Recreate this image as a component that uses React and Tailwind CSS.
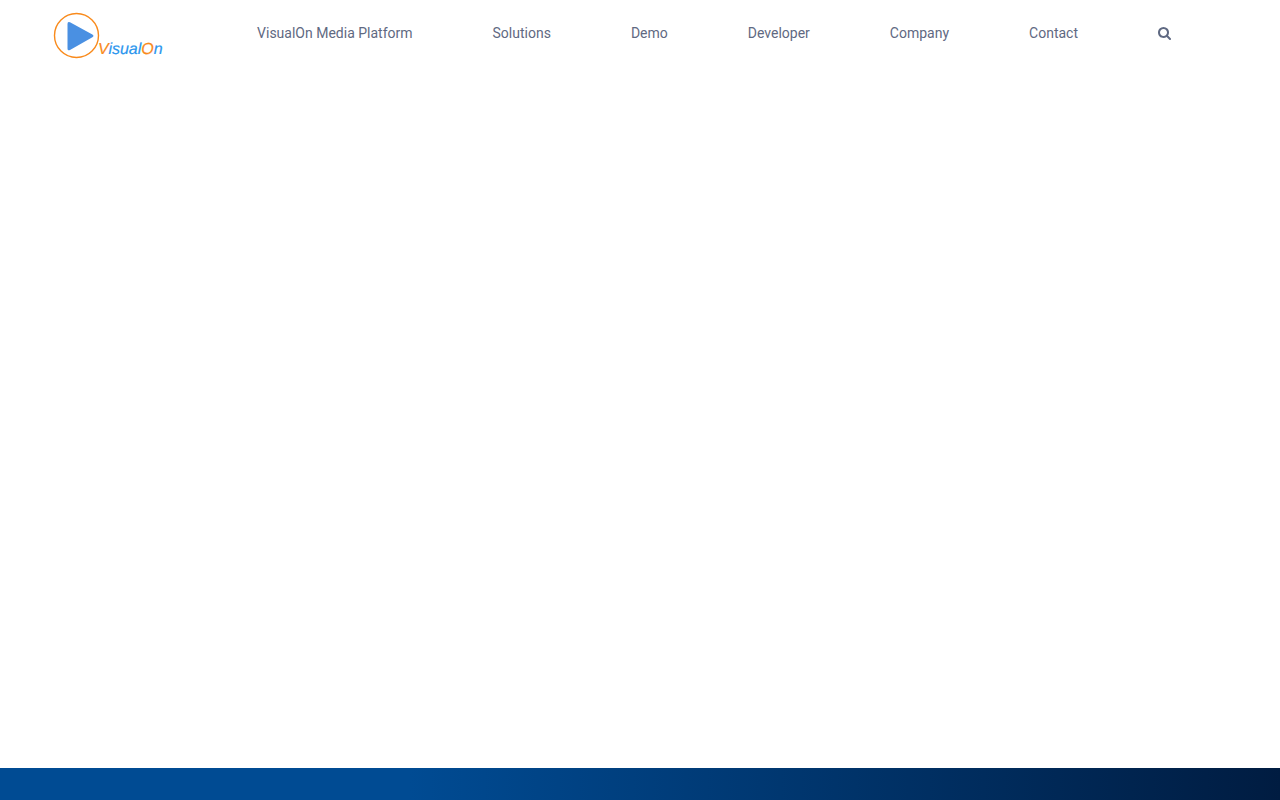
const links = [
  "VisualOn Media Platform",
  "Solutions",
  "Demo",
  "Developer",
  "Company",
  "Contact",
];

function Logo() {
  return (
    <svg width="112" height="48" viewBox="0 0 112 48" role="img" aria-label="VisualOn">
      <circle cx="23.5" cy="23.5" r="22" fill="none" stroke="#f98a1b" strokeWidth="1.4" />
      <path
        d="M14.5 12 Q14.500 9 17 10.300 L39.400 22.500 Q41.600 24 39.400 25.200 L17 38 Q14.500 39.200 14.500 36.500 Z"
        fill="#4a90e2"
      />
      <text
        x="45"
        y="42"
        fontSize="16"
        fontStyle="italic"
        fontFamily="Liberation Sans, Arial, sans-serif"
        textRendering="geometricPrecision"
        fill="#2b96ee"
        stroke="#2b96ee"
        strokeWidth="0.2"
      >
        <tspan fill="#f98a1b" stroke="#f98a1b">V</tspan>
        isual
        <tspan fill="#f98a1b" stroke="#f98a1b">O</tspan>
        n
      </text>
    </svg>
  );
}

function SearchIcon() {
  return (
    <svg width="14" height="14" viewBox="64 0 1792 1792" fill="currentColor" aria-hidden="true">
      <path d="M1216 832q0-185-131.500-316.500t-316.500-131.500-316.500 131.500-131.500 316.500 131.500 316.500 316.500 131.500 316.500-131.500 131.500-316.500zm512 832q0 52-38 90t-90 38q-54 0-90-38l-343-342q-179 124-399 124-143 0-273.500-55.500t-225-150-150-225-55.500-273.500 55.500-273.500 150-225 225-150 273.500-55.500 273.500 55.500 225 150 150 225 55.500 273.500q0 220-124 399l343 343q37 37 37 90z" />
    </svg>
  );
}

export default function App() {
  return (
    <div className="flex min-h-screen flex-col bg-white font-['Roboto',sans-serif]">
      <header className="flex items-start pr-[108px] pl-[53px]">
        <a href="#home" className="mt-3 shrink-0">
          <Logo />
        </a>
        <nav className="ml-auto flex items-center gap-20 pt-[23px] text-sm leading-5 text-[#5f6982]">
          {links.map((label) => (
            <a key={label} href="#menu" className="whitespace-nowrap">
              {label}
            </a>
          ))}
          <button type="button" aria-label="Search" className="block">
            <SearchIcon />
          </button>
        </nav>
      </header>
      <main className="grow" />
      <footer className="h-8 bg-linear-to-r/srgb from-[#004b93] from-32% to-[#001c41]" />
    </div>
  );
}
